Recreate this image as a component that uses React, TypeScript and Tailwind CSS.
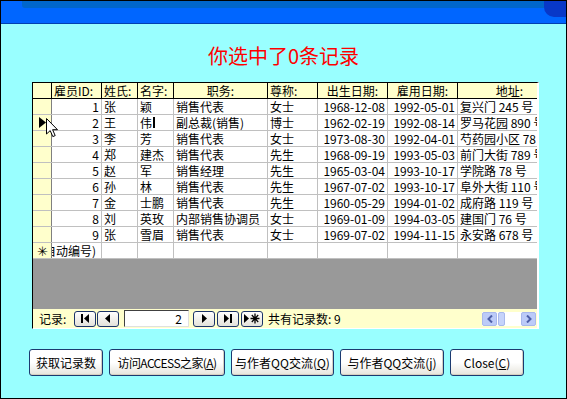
import React from 'react';

type Employee = {
  id: number;
  last: string;
  first: string;
  title: string;
  courtesy: string;
  birth: string;
  hire: string;
  address: string;
};

const employees: Employee[] = [
  { id: 1, last: '张', first: '颖', title: '销售代表', courtesy: '女士', birth: '1968-12-08', hire: '1992-05-01', address: '复兴门 245 号' },
  { id: 2, last: '王', first: '伟', title: '副总裁(销售)', courtesy: '博士', birth: '1962-02-19', hire: '1992-08-14', address: '罗马花园 890 号' },
  { id: 3, last: '李', first: '芳', title: '销售代表', courtesy: '女士', birth: '1973-08-30', hire: '1992-04-01', address: '芍药园小区 78 号' },
  { id: 4, last: '郑', first: '建杰', title: '销售代表', courtesy: '先生', birth: '1968-09-19', hire: '1993-05-03', address: '前门大街 789 号' },
  { id: 5, last: '赵', first: '军', title: '销售经理', courtesy: '先生', birth: '1965-03-04', hire: '1993-10-17', address: '学院路 78 号' },
  { id: 6, last: '孙', first: '林', title: '销售代表', courtesy: '先生', birth: '1967-07-02', hire: '1993-10-17', address: '阜外大街 110 号' },
  { id: 7, last: '金', first: '士鹏', title: '销售代表', courtesy: '先生', birth: '1960-05-29', hire: '1994-01-02', address: '成府路 119 号' },
  { id: 8, last: '刘', first: '英玫', title: '内部销售协调员', courtesy: '女士', birth: '1969-01-09', hire: '1994-03-05', address: '建国门 76 号' },
  { id: 9, last: '张', first: '雪眉', title: '销售代表', courtesy: '女士', birth: '1969-07-02', hire: '1994-11-15', address: '永安路 678 号' },
];

const cell = 'flex items-center h-full shrink-0 border-r border-[#C0C0C0] px-[2px] overflow-hidden whitespace-nowrap';
const head = 'flex items-center h-full shrink-0 border-r border-black px-[2px] overflow-hidden whitespace-nowrap';

function NavButton({ children }: { children: React.ReactNode }) {
  return (
    <div className="w-[22px] h-[16px] shrink-0 rounded-[3px] border border-[#1C3468] bg-gradient-to-b from-white to-[#E4E2DA] flex items-center justify-center">
      {children}
    </div>
  );
}

function FormButton({ w, children }: { w: string; children: React.ReactNode }) {
  return (
    <div
      className={`${w} h-[27px] shrink-0 rounded-[3px] border border-[#1C3A70] bg-gradient-to-b from-white via-white to-[#E6E4DC] shadow-[inset_-1px_-1px_0_#D6D0C0] flex items-center justify-center whitespace-nowrap`}
    >
      {children}
    </div>
  );
}

export default function App() {
  return (
    <div className="relative w-[567px] h-[399px] border border-black bg-[#99FFFF] flex flex-col font-['Noto_Sans_CJK_SC',sans-serif] text-[12px] leading-[14px] text-black overflow-hidden">
      {/* title bar */}
      <div className="h-[23px] shrink-0 bg-[#0066FF] border-b border-[#0040B0] flex">
        <div className="w-[21px] shrink-0" />
        <div className="flex-1 h-[7px] bg-[#0066CC] rounded-bl-[3px]" />
        <div className="w-[22px] h-[16px] shrink-0 bg-[#0838C8] rounded-bl-[10px]" />
      </div>

      <div className="h-[58px] shrink-0 pt-[5px] flex items-center justify-center text-[20px] leading-[24px] text-[#FF0000]">
        你选中了0条记录
      </div>

      {/* datasheet */}
      <div className="ml-[31px] w-[507px] shrink-0 border-l border-t border-black border-r-2 border-r-white border-b border-b-white flex flex-col overflow-hidden">
        <div className="h-[16px] flex bg-[#FFFFCC] border-b border-black">
          <div className={`${head} w-[19px]`} />
          <div className={`${head} w-[50px]`}>雇员ID:</div>
          <div className={`${head} w-[36px]`}>姓氏:</div>
          <div className={`${head} w-[36px]`}>名字:</div>
          <div className={`${head} w-[94px] justify-center`}>职务:</div>
          <div className={`${head} w-[50px]`}>尊称:</div>
          <div className={`${head} w-[70px] justify-center`}>出生日期:</div>
          <div className={`${head} w-[70px] justify-center`}>雇用日期:</div>
          <div className={`${head} w-[104px] justify-center`}>地址:</div>
        </div>

        {employees.map((e) => (
          <div key={e.id} className="h-[16px] flex bg-white border-b border-[#C0C0C0]">
            <div className="w-[19px] h-full shrink-0 bg-[#FFFFCC] border-r border-[#808080] flex items-center justify-center">
              {e.id === 2 && (
                <svg width="7" height="11" viewBox="0 0 7 11">
                  <path d="M0 0 L7 5.5 L0 11 Z" fill="#000" />
                </svg>
              )}
            </div>
            <div className={`${cell} w-[50px] justify-end`}>{e.id}</div>
            <div className={`${cell} w-[36px]`}>{e.last}</div>
            <div className={`${cell} w-[36px]`}>
              {e.first}
              {e.id === 2 && <span className="ml-[1px] w-[2px] h-[11px] bg-black" />}
            </div>
            <div className={`${cell} w-[94px]`}>{e.title}</div>
            <div className={`${cell} w-[50px]`}>{e.courtesy}</div>
            <div className={`${cell} w-[70px] justify-end`}>{e.birth}</div>
            <div className={`${cell} w-[70px] justify-end`}>{e.hire}</div>
            <div className={`${cell} w-[104px]`}>{e.address}</div>
          </div>
        ))}

        <div className="h-[16px] flex bg-white border-b border-[#C0C0C0]">
          <div className="w-[19px] h-full shrink-0 bg-[#FFFFCC] border-r border-[#808080] flex items-center justify-center text-[13px]">
            ✳
          </div>
          <div className="relative w-[50px] h-full shrink-0 border-r border-[#C0C0C0] overflow-hidden whitespace-nowrap flex items-center justify-end pr-[5px]">
            <span className="shrink-0">(自动编号)</span>
          </div>
          <div className={`${cell} w-[36px]`} />
          <div className={`${cell} w-[36px]`} />
          <div className={`${cell} w-[94px]`} />
          <div className={`${cell} w-[50px]`} />
          <div className={`${cell} w-[70px]`} />
          <div className={`${cell} w-[70px]`} />
          <div className={`${cell} w-[104px]`} />
        </div>

        <div className="h-[50px] bg-[#999999]" />

        {/* navigation bar */}
        <div className="h-[19px] bg-[#FFFFCC] flex items-center pl-[6px]">
          <span className="w-[35px] shrink-0">记录:</span>
          <NavButton>
            <svg width="10" height="9" viewBox="0 0 10 9">
              <rect x="1" y="0" width="2" height="9" fill="#000" />
              <path d="M9 0 L4 4.5 L9 9 Z" fill="#000" />
            </svg>
          </NavButton>
          <div className="w-[1px]" />
          <NavButton>
            <svg width="6" height="9" viewBox="0 0 6 9">
              <path d="M5 0 L0 4.5 L5 9 Z" fill="#000" />
            </svg>
          </NavButton>
          <div className="ml-[5px] w-[65px] h-[17px] shrink-0 bg-white border-t border-l border-[#404040] border-r border-b border-r-[#E0E0E0] border-b-[#E0E0E0] flex items-center justify-end pr-[6px]">
            2
          </div>
          <div className="w-[4px]" />
          <NavButton>
            <svg width="6" height="9" viewBox="0 0 6 9">
              <path d="M1 0 L6 4.5 L1 9 Z" fill="#000" />
            </svg>
          </NavButton>
          <div className="w-[2px]" />
          <NavButton>
            <svg width="10" height="9" viewBox="0 0 10 9">
              <path d="M1 0 L6 4.5 L1 9 Z" fill="#000" />
              <rect x="7" y="0" width="2" height="9" fill="#000" />
            </svg>
          </NavButton>
          <div className="w-[2px]" />
          <NavButton>
            <svg width="16" height="11" viewBox="0 0 16 11">
              <path d="M0 1 L5 5.5 L0 10 Z" fill="#000" />
              <path d="M11 0.5 V10.5 M6.5 5.5 H15.5 M7.8 2 L14.2 9 M14.2 2 L7.8 9" stroke="#000" strokeWidth="1.3" />
            </svg>
          </NavButton>
          <span className="ml-[5px] whitespace-nowrap">共有记录数: 9</span>
          <div className="flex-1" />
          {/* horizontal scrollbar */}
          <div className="w-[54px] h-[14px] shrink-0 flex items-center bg-white">
            <div className="w-[15px] h-[14px] rounded-[2px] border border-[#A8B8EC] bg-[#BCCBF8] flex items-center justify-center">
              <svg width="6" height="8" viewBox="0 0 6 8">
                <path d="M5 0.5 L1.5 4 L5 7.5" stroke="#4D5FA8" strokeWidth="2" fill="none" />
              </svg>
            </div>
            <div className="ml-[1px] w-[7px] h-[14px] rounded-[2px] border border-[#A8B8EC] bg-[#C6D3FA]" />
            <div className="flex-1" />
            <div className="w-[15px] h-[14px] rounded-[2px] border border-[#A8B8EC] bg-[#BCCBF8] flex items-center justify-center">
              <svg width="6" height="8" viewBox="0 0 6 8">
                <path d="M1 0.5 L4.5 4 L1 7.5" stroke="#4D5FA8" strokeWidth="2" fill="none" />
              </svg>
            </div>
          </div>
          <div className="w-[1px]" />
        </div>
      </div>

      {/* command buttons */}
      <div className="mt-[20px] ml-[28px] flex gap-[6px]">
        <FormButton w="w-[74px]">获取记录数</FormButton>
        <FormButton w="w-[116px]">
          <span className="tracking-[-0.6px]">访问ACCESS之家(<span className="underline">A</span>)</span>
        </FormButton>
        <FormButton w="w-[103px]">
          与作者QQ交流(<span className="underline">Q</span>)
        </FormButton>
        <FormButton w="w-[104px]">
          与作者QQ交流(<span className="underline">j</span>)
        </FormButton>
        <FormButton w="w-[74px]">
          Close(<span className="underline">C</span>)
        </FormButton>
      </div>

      {/* mouse pointer over the record selector */}
      <svg className="absolute left-[45px] top-[117px]" width="13" height="20" viewBox="0 0 13 20">
        <path d="M0.5 0.5 L0.5 16 L4.2 12.6 L6.8 18.6 L9.2 17.6 L6.6 11.7 L11.5 11.7 Z" fill="#fff" stroke="#000" strokeWidth="1" />
      </svg>
    </div>
  );
}
